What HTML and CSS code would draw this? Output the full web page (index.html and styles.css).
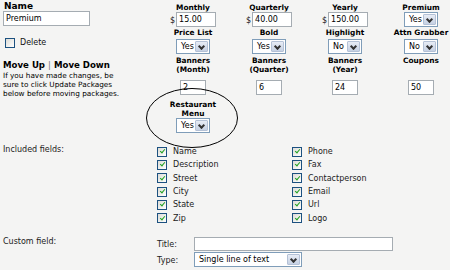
FILE: index.html
```html
<!DOCTYPE html>
<html lang="en">
<head>
  <meta charset="UTF-8">
  <title>Edit package</title>
  <link rel="stylesheet" href="styles.css">
</head>
<body>
  <div class="page">
    <div class="top">
      <div class="side">
        <div class="name-lbl">Name</div>
        <div class="txt name-in">Premium</div>
        <div class="del"><span class="cb"></span><span>Delete</span></div>
        <div class="move"><a>Move Up</a> <span class="sep">|</span> <a>Move Down</a></div>
        <p class="note">If you have made changes, be<br>sure to click Update Packages<br>below before moving packages.</p>
      </div>
      <div class="opts">
        <!-- row 1 -->
        <div class="opt r1"><div class="hd">Monthly</div><div class="fld"><span class="cur">$</span><div class="txt price">15.00</div></div></div>
        <div class="opt r1"><div class="hd">Quarterly</div><div class="fld"><span class="cur">$</span><div class="txt price">40.00</div></div></div>
        <div class="opt r1"><div class="hd">Yearly</div><div class="fld"><span class="cur">$</span><div class="txt price">150.00</div></div></div>
        <div class="opt r1"><div class="hd">Premium</div><div class="fld"><div class="sel yn"><span class="val">Yes</span><span class="arr"></span></div></div></div>
        <!-- row 2 -->
        <div class="opt"><div class="hd">Price List</div><div class="fld"><div class="sel yn"><span class="val">Yes</span><span class="arr"></span></div></div></div>
        <div class="opt"><div class="hd">Bold</div><div class="fld"><div class="sel yn"><span class="val">Yes</span><span class="arr"></span></div></div></div>
        <div class="opt"><div class="hd">Highlight</div><div class="fld"><div class="sel yn"><span class="val">No</span><span class="arr"></span></div></div></div>
        <div class="opt"><div class="hd">Attn Grabber</div><div class="fld"><div class="sel yn"><span class="val">No</span><span class="arr"></span></div></div></div>
        <!-- row 3 -->
        <div class="opt"><div class="hd">Banners<br>(Month)</div><div class="fld"><div class="txt num">2</div></div></div>
        <div class="opt"><div class="hd">Banners<br>(Quarter)</div><div class="fld"><div class="txt num">6</div></div></div>
        <div class="opt"><div class="hd">Banners<br>(Year)</div><div class="fld"><div class="txt num">24</div></div></div>
        <div class="opt"><div class="hd">Coupons</div><div class="fld"><div class="txt num">50</div></div></div>
        <!-- row 4 -->
        <div class="opt r4"><div class="hd">Restaurant<br>Menu</div><div class="fld"><div class="sel yn"><span class="val">Yes</span><span class="arr"></span></div></div></div>
      </div>
    </div>

    <div class="fields">
      <div class="sec-lbl">Included fields:</div>
      <div class="fgrid">
        <div class="fi"><span class="cb on"></span>Name</div>
        <div class="fi"><span class="cb on"></span>Phone</div>
        <div class="fi"><span class="cb on"></span>Description</div>
        <div class="fi"><span class="cb on"></span>Fax</div>
        <div class="fi"><span class="cb on"></span>Street</div>
        <div class="fi"><span class="cb on"></span>Contactperson</div>
        <div class="fi"><span class="cb on"></span>City</div>
        <div class="fi"><span class="cb on"></span>Email</div>
        <div class="fi"><span class="cb on"></span>State</div>
        <div class="fi"><span class="cb on"></span>Url</div>
        <div class="fi"><span class="cb on"></span>Zip</div>
        <div class="fi"><span class="cb on"></span>Logo</div>
      </div>
    </div>

    <div class="custom">
      <div class="sec-lbl">Custom field:</div>
      <div class="cgrid">
        <span class="clbl">Title:</span><div class="txt title-in"></div>
        <span class="clbl">Type:</span><div class="sel type-sel"><span class="val">Single line of text</span><span class="arr"></span></div>
      </div>
    </div>

    <!-- hand drawn circle round the new option -->
    <svg class="circle" width="96" height="64" viewBox="0 0 96 64">
      <ellipse cx="48" cy="32" rx="45.5" ry="29.5" fill="none" stroke="#000" stroke-width="1"/>
    </svg>
  </div>
</body>
</html>
```

FILE: styles.css
```css
html, body {
  margin: 0; padding: 0;
  overflow: hidden;
  background: #f4f4f3;
  font-family: "DejaVu Sans", Verdana, sans-serif;
  font-size: 8px;
  color: #111;
}
.page { position: relative; padding: 0 3px; width: 444px; height: 270px; }

/* top block */
.top { display: flex; }
.side { width: 152px; flex: none; padding-top: 2px; }
.name-lbl { font-weight: bold; font-size: 9px; line-height: 9px; color: #000; padding-left: 1px; }
.txt {
  box-sizing: border-box; height: 15px;
  background: #fff; border: 1px solid #a5acb2;
  padding: 0 2px; line-height: 13px; color: #000;
  white-space: nowrap; overflow: hidden;
}
.name-in { width: 87px; }
.del { display: flex; align-items: center; gap: 5px; margin: 12px 0 0 2px; height: 10px; line-height: 10px; }
.move { margin-top: 12px; font-weight: bold; font-size: 8.6px; line-height: 10px; color: #000; }
.move .sep { font-weight: normal; color: #777; }
.note { margin: 1px 0 0; font-size: 7.3px; line-height: 9.2px; color: #000; }

.opts {
  display: grid;
  grid-template-columns: repeat(4, 76px);
  grid-template-rows: 26px 28px 41px 37px;
  flex: none;
}
.opt {
  display: flex; flex-direction: column; align-items: center;
  justify-content: space-between; padding-top: 1.5px;
}
.opt.r1 { padding-top: 2.5px; }
.opt.r4 { padding-top: 6px; }
.hd { font-weight: bold; font-size: 7.4px; line-height: 9px; text-align: center; color: #000; white-space: nowrap; }
.r4 .hd { line-height: 8.5px; }
.fld { display: flex; align-items: center; }
.cur { margin-right: 1px; padding-top: 3px; }
.price { width: 40px; }
.num { width: 26px; }

.sel {
  box-sizing: border-box; height: 15px;
  display: flex; align-items: stretch;
  background: #fff; border: 1px solid #7f9db9;
  padding: 1px; color: #000;
}
.sel .val { flex: 1; padding-left: 3px; line-height: 11px; white-space: nowrap; }
.sel .arr {
  width: 13px; flex: none; box-sizing: border-box;
  border: 1px solid #b4c1d6; border-radius: 1px;
  background: linear-gradient(#e7ecf5, #c6d1e3);
  position: relative;
}
.sel .arr::after {
  content: ""; position: absolute; left: 3px; top: 2px;
  width: 3px; height: 3px;
  border-right: 2px solid #333; border-bottom: 2px solid #333;
  transform: rotate(45deg);
}
.yn { width: 34px; }

/* checkboxes */
.cb {
  display: inline-block; box-sizing: border-box; flex: none;
  width: 10px; height: 10px;
  border: 1px solid #1c5180;
  background: linear-gradient(135deg, #dcdcd7, #fff);
  position: relative;
}
.cb.on::after {
  content: ""; position: absolute; left: 2.5px; top: 0.5px;
  width: 2px; height: 4px;
  border-right: 1.6px solid #21a121; border-bottom: 1.6px solid #21a121;
  transform: rotate(40deg);
}

/* included fields */
.fields { display: flex; margin-top: 13px; }
.sec-lbl { width: 154px; flex: none; line-height: 9px; color: #222; }
.fgrid { display: grid; grid-template-columns: 135px 120px; grid-auto-rows: 13.34px; }
.fi { display: flex; align-items: center; gap: 6px; color: #222; }

/* custom field */
.custom { display: flex; margin-top: 12px; }
.cgrid {
  display: grid; grid-template-columns: 37px auto;
  row-gap: 1px; align-items: center; justify-items: start;
}
.clbl { color: #222; padding-top: 2px; }
.title-in { width: 199px; height: 14px; }
.type-sel { width: 108px; }

.circle { position: absolute; left: 144px; top: 86px; }
```
